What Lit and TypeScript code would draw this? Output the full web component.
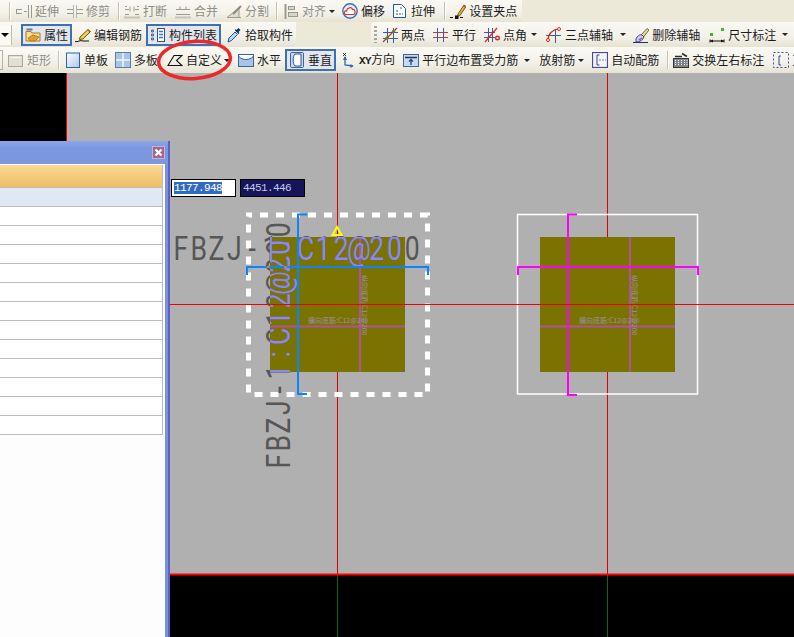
import { LitElement, html, css, svg } from "lit";
import { customElement } from "lit/decorators.js";

// gray used by the disabled tools of the first row
const G = "#9a9a94";

const icons: Record<string, unknown> = {
  extend: svg`<path d="M0 6.5h6M0 10.5h6M8 8.5h3" stroke="${G}"/><path d="M12.5 2v13M15.5 2v13" stroke="${G}"/><path d="M0.5 6v5" stroke="${G}"/>`,
  trim: svg`<path d="M0 6.5h6M0 10.5h6M10 6.5h6M10 10.5h6" stroke="${G}"/><path d="M6.5 2v13M9.5 2v13" stroke="#b4b4ae"/>`,
  cut: svg`<path d="M1 6.5h4M1 11.5h4M11 6.5h4M11 11.5h4M6 3.5v5M10 3.5v5" stroke="${G}"/><path d="M0 14.5h16" stroke="#c4c4bc" stroke-width="2"/><path d="M1 3.5h2M13 3.5h2" stroke="${G}"/>`,
  merge: svg`<path d="M1 6.5h14M1 11.5h14M5 3.5v3M11 3.5v3" stroke="${G}"/><path d="M0 14.5h16" stroke="#c4c4bc" stroke-width="2"/>`,
  split: svg`<path d="M1 14.5h14M1 14.5L13 5v9.5" stroke="${G}" fill="#dedcd0"/><path d="M7 11l8-8" stroke="#8a8a84" stroke-width="2"/>`,
  align: svg`<path d="M2.5 1v15" stroke="${G}" stroke-width="2"/><rect x="5.5" y="3.5" width="6" height="3" fill="#d8d6ca" stroke="${G}"/><rect x="5.5" y="9.5" width="9" height="4" fill="#d8d6ca" stroke="${G}"/>`,
  offset: svg`<circle cx="8" cy="8" r="7.200" fill="#e4ecf8" stroke="#3f6fb0" stroke-width="1.400"/><path d="M3 11.500c-1.500-2 0-4 1.500-3.500 .5-3.500 5-4.500 6-1.500 2.500-.5 3.500 3.500 1.500 5z" fill="#fff" stroke="#d8342c" stroke-width="1.200"/>`,
  stretch: svg`<path d="M1.500 1.500h8l4 4v9h-12z" fill="#fff" stroke="#245a9c"/><path d="M4 8h2M4 11h7M8 5h3" stroke="#245a9c" stroke-dasharray="2 1"/>`,
  grip: svg`<path d="M8 11l6-9 2 1.500-6 9-2.500 1z" fill="#e6b040" stroke="#75561c"/><path d="M13.500 2.500l2 1.500" stroke="#c33"/><path d="M0 14.500h3M10 14.500h3" stroke="#111"/><rect x="5" y="12.500" width="3.500" height="3.500" fill="#111"/>`,
  props: svg`<path d="M1 4.500h5l1 1.500h8v8H1z" fill="#f5dc92" stroke="#a87c28"/><path d="M1.500 2.500h6" stroke="#5b7db4" stroke-width="2"/><path d="M3 11l5-3 6 2-4 4H5z" fill="#e4a022" stroke="#8a5c10" stroke-width=".6"/>`,
  rebar: svg`<path d="M5 10L13 2.500l2.500 2L8 12l-3.500.5z" fill="#f2cf52" stroke="#6a5416"/><path d="M0 14.500c3 1 5-2 8-.5h6" stroke="#111" fill="none"/><path d="M12.500 3l2.500 2" stroke="#c44"/>`,
  list: svg`<path d="M1.500 3h2v2h-2zM1.500 7h2v2h-2zM1.500 11h2v2h-2z" fill="#9ab8e0" stroke="#33507e" stroke-width=".8"/><rect x="7.500" y="1.500" width="7" height="13" fill="#fff" stroke="#33507e"/><path d="M9 4.500h4M9 7.500h4M9 10.500h4" stroke="#3a78c8" stroke-width="1.500"/>`,
  pick: svg`<path d="M2 15l1-4 6-6 2.500 2.500-6 6z" fill="#bcd8f6" stroke="#1c4f98"/><path d="M9 3.500l3.500 3.500 1-1-1-1 2-2-2-2-2 2-1-1z" fill="#12305e"/>`,
  two: svg`<path d="M1 5.500h15M1 11.500h15M5.500 1v15M11.500 1v15" stroke="#3c5a9c"/><path d="M1 15L15 1" stroke="#d8281e" stroke-width="1.200"/><circle cx="5" cy="11" r="1.800" fill="#4f8a2c"/><circle cx="11.500" cy="4.500" r="1.800" fill="#4f8a2c"/>`,
  par: svg`<path d="M0 5.500h15M0 10.500h15" stroke="#b0403a"/><path d="M4.500 1v14M10.500 1v14" stroke="#3c5a9c"/>`,
  angle: svg`<path d="M0 5.500h11M0 10.500h11M4.500 1v14M8.500 1v14" stroke="#3c5a9c"/><path d="M1 15L13 1" stroke="#d8281e" stroke-width="1.200"/><circle cx="13.500" cy="11" r="1.800" fill="#fff" stroke="#d8281e" stroke-width="1.400"/>`,
  arc: svg`<path d="M0 8.500h15M9.500 3v13" stroke="#3c5a9c"/><path d="M2 13C2 7 7 2 13 2" stroke="#d8281e" fill="none" stroke-width="1.200"/><circle cx="2" cy="13" r="1.500" fill="#fff" stroke="#d8281e"/><circle cx="13" cy="2" r="1.500" fill="#fff" stroke="#d8281e"/>`,
  erase: svg`<path d="M8 8L14 1.500l2 1.500-5.500 7z" fill="#f2d47a" stroke="#6a6a70"/><path d="M3 12c1-3 4-5 6-4l2 2c-1 3-4 5-8 5z" fill="#c8cce8" stroke="#3a4a96"/><path d="M0 15.500h15" stroke="#1d2f70"/><path d="M6 13l3-2" stroke="#c03a8a" stroke-width="1.500"/>`,
  dim: svg`<rect x="1" y="6" width="3" height="3" fill="#3cb43c"/><rect x="12" y="1" width="3" height="3" fill="#3cb43c"/><path d="M1 12.500v3M15 12.500v3M1 14h14" stroke="#111"/><path d="M1 14l3-1.500v3zM15 14l-3-1.500v3z" fill="#111"/>`,
  rect: svg`<rect x=".5" y="3.500" width="14" height="11" fill="#e2e0d6" stroke="#aaa8a0"/><path d="M2 5.500h11" stroke="#f6f5ee"/>`,
  single: svg`<defs><linearGradient id="sg" x1="0" y1="0" x2="1" y2="1"><stop offset="0" stop-color="#fff"/><stop offset="1" stop-color="#a9c6f0"/></linearGradient></defs><rect x="1.500" y="1" width="13" height="14.500" fill="url(#sg)" stroke="#2660b8"/>`,
  multi: svg`<rect x=".5" y=".5" width="15" height="15" fill="#a8c6e6" stroke="#5680ac"/><path d="M8 1v14M1 8h14" stroke="#f2f6fb" stroke-width="1.500"/>`,
  custom: svg`<path d="M1 13.500L7 3.500H15L9.500 8.500L15 13.500Z" fill="none" stroke="#111" stroke-width="1.100"/>`,
  horiz: svg`<rect x=".5" y="2.500" width="15" height="12" fill="#a8c4e8" stroke="#3c6498"/><path d="M1 4.500c3 4 11 4 14 0v-1.500H1z" fill="#fff"/><path d="M1 4.500c3 4 11 4 14 0" stroke="#3c6498" fill="none"/>`,
  vert: svg`<rect x="1.500" y=".5" width="13" height="15" rx="1" fill="#c4d8f2" stroke="#3c6498"/><path d="M6 2c-2.500 3-2.500 9 0 12h6V2z" fill="#fff" stroke="#2f5488"/>`,
  xy: svg`<path d="M5 5v8l8 1" stroke="#2a6ab4" fill="none" stroke-width="1.300"/><path d="M5 4l-2 4h4zM13.500 14l-3-2v4z" fill="#2a6ab4"/><path d="M3 1l3 3M6 1L3 4" stroke="#111" stroke-width=".8"/>`,
  paredge: svg`<rect x=".5" y="2.500" width="15" height="12" fill="#c6daf2" stroke="#3c6498"/><path d="M2 5.500h12" stroke="#24344e" stroke-width="1.500"/><path d="M8 13V7.500M6 9.500l2-2 2 2" stroke="#24467a" fill="none" stroke-width="1.300"/>`,
  auto: svg`<rect x=".5" y=".5" width="15" height="15" fill="#f4f4fa" stroke="#4a44b4" stroke-width="1.200"/><path d="M7.500 3H5v10h2.500" stroke="#2c4890" fill="none"/><path d="M7 8h7" stroke="#6a86c4" stroke-dasharray="2 1"/>`,
  swap: svg`<rect x=".5" y="6.500" width="15" height="9" fill="#84848c" stroke="#33333a"/><path d="M2.500 8v6M5.500 8v6M8.500 8v6M11.500 8v6M14 8v6" stroke="#fff" stroke-dasharray="1 1"/><path d="M2 4.500h7M9 1.500l5 3" stroke="#2a2a30" stroke-width="1.500"/>`,
  frame: svg`<rect x=".5" y=".5" width="15" height="15" fill="none" stroke="#3c4ca8" stroke-dasharray="2 2"/><path d="M8 4H6v9h2" stroke="#2c4890" fill="none"/>`,
};

type Item = {
  ml: number;
  kind?: "sep" | "grip" | "drop" | "edge";
  i?: string;
  t?: string;
  arrow?: number;
  on?: boolean;
  off?: boolean;
  latin?: string;
};

const row1: Item[] = [
  { ml: 9, kind: "sep" },
  { ml: 5, i: "extend", t: "延伸", off: true },
  { ml: 8, i: "trim", t: "修剪", off: true },
  { ml: 8, kind: "sep" },
  { ml: 4, i: "cut", t: "打断", off: true },
  { ml: 8, i: "merge", t: "合并", off: true },
  { ml: 8, i: "split", t: "分割", off: true },
  { ml: 7, kind: "sep" },
  { ml: 5, i: "align", t: "对齐", off: true, arrow: 2 },
  { ml: 6, i: "offset", t: "偏移" },
  { ml: 7, i: "stretch", t: "拉伸" },
  { ml: 9, kind: "sep" },
  { ml: 4, i: "grip", t: "设置夹点" },
];

const row2a: Item[] = [
  { ml: 0, kind: "drop" },
  { ml: 9, i: "props", t: "属性", on: true },
  { ml: 3, i: "rebar", t: "编辑钢筋" },
  { ml: 4, i: "list", t: "构件列表", on: true },
  { ml: 5, i: "pick", t: "拾取构件" },
];

const row2b: Item[] = [
  { ml: 3, kind: "grip" },
  { ml: 5, i: "two", t: "两点" },
  { ml: 8, i: "par", t: "平行" },
  { ml: 8, i: "angle", t: "点角", arrow: 3 },
  { ml: 8, i: "arc", t: "三点辅轴", arrow: 6 },
  { ml: 6, i: "erase", t: "删除辅轴" },
  { ml: 9, i: "dim", t: "尺寸标注", arrow: 5 },
];

const row3: Item[] = [
  { ml: 0, kind: "edge" },
  { ml: 5, i: "rect", t: "矩形", off: true },
  { ml: 7, kind: "sep" },
  { ml: 5, i: "single", t: "单板" },
  { ml: 7, i: "multi", t: "多板" },
  { ml: 9, i: "custom", t: "自定义", arrow: 1 },
  { ml: 7, i: "horiz", t: "水平" },
  { ml: 4, i: "vert", t: "垂直", on: true },
  { ml: 4, i: "xy", latin: "XY", t: "方向" },
  { ml: 8, i: "paredge", t: "平行边布置受力筋", arrow: 5 },
  { ml: 8, t: "放射筋", arrow: 2 },
  { ml: 7, i: "auto", t: "自动配筋" },
  { ml: 8, kind: "sep" },
  { ml: 4, i: "swap", t: "交换左右标注" },
  { ml: 9, i: "frame", t: "互换" },
];

// the CAD labels use fixed character cells of about 17.8px, with narrowed glyphs
const LABEL = "FBZJ-1:C12@200";
const CELL = 17.8;
const NARROW = 0.78;
const cells = Array.from(LABEL, (_, n) => (((n + 0.5) * CELL) / NARROW).toFixed(1)).join(" ");

@customElement("app-root")
export class AppRoot extends LitElement {
  static styles = css`
    :host {
      display: block;
      position: relative;
      width: 794px;
      height: 637px;
      overflow: hidden;
      font-family: "Noto Sans CJK SC", "Liberation Sans", sans-serif;
      font-size: 12px;
      color: #1c1c1c;
      background: #ece9d8;
    }

    .page {
      display: flex;
      flex-direction: column;
      height: 100%;
    }

    /* toolbars */
    .row {
      display: flex;
      flex: none;
      overflow: hidden;
      white-space: nowrap;
    }
    .row.r1 { height: 22px; }
    .row.r2 { height: 25px; }
    .row.r3 { height: 26px; }
    .band {
      display: flex;
      align-items: center;
      flex: none;
      background: linear-gradient(#faf9f4, #f3f1e8 60%, #e6e3d3);
    }
    .row.r1 .band { padding-right: 5px; }
    .band.a { padding-right: 3px; border-radius: 0 0 4px 0; }
    .band.b { margin-left: 75px; flex: 1; border-radius: 4px 0 0 0; }
    .row.r3 .band { flex: 1; }

    .tool {
      display: flex;
      align-items: center;
      flex: none;
      gap: 3px;
      height: 20px;
      line-height: 20px;
    }
    .tool svg { display: block; flex: none; }
    .tool.off { color: #8e8e88; }
    .tool.on {
      height: 22px;
      padding: 0 2px;
      border: 2px solid #3f6fb5;
      box-sizing: border-box;
      background: #e4e6ee;
    }
    .latin {
      font-family: "Liberation Mono", monospace;
      font-size: 11px;
      font-weight: 700;
      letter-spacing: -0.6px;
    }
    .arrow {
      flex: none;
      width: 0;
      height: 0;
      border: 3px solid transparent;
      border-top: 3px solid #222;
      border-bottom: 0;
      margin: 0 1px;
      box-sizing: content-box;
    }
    .sep {
      flex: none;
      width: 1px;
      height: 18px;
      background: #c4c2b4;
      border-right: 1px solid #fff;
    }
    .gripper {
      flex: none;
      width: 3px;
      height: 17px;
      background: repeating-linear-gradient(#a8a69a 0 2px, transparent 2px 4px);
    }
    .drop {
      display: flex;
      align-items: center;
      justify-content: flex-end;
      flex: none;
      width: 12px;
      height: 20px;
      padding-right: 2px;
      box-sizing: border-box;
      background: #fbfaf5;
      border-right: 1px solid #bdbbae;
    }
    .drop i {
      width: 0;
      height: 0;
      border: 4px solid transparent;
      border-top: 4px solid #000;
      border-bottom: 0;
    }
    .edge {
      flex: none;
      width: 3px;
      height: 20px;
      border: 1px solid #b4b2a6;
      border-left: 0;
      box-sizing: border-box;
    }

    /* drawing area */
    .canvas {
      position: relative;
      flex: 1;
      min-height: 0;
      background: #000;
    }
    .cad {
      position: absolute;
      inset: 0;
      display: block;
    }
    .big {
      font-family: Roboto, "Liberation Sans", sans-serif;
      font-size: 34px;
      text-anchor: middle;
    }
    .tiny {
      font-family: "Noto Sans CJK SC", sans-serif;
      font-size: 7px;
      fill: #9a8fa6;
    }

    /* floating panel */
    .panel {
      position: absolute;
      left: 0;
      top: 68px;
      bottom: 0;
      width: 170px;
      display: flex;
      flex-direction: column;
      box-sizing: border-box;
      background: #7b90e0;
      border-right: 2px solid #5a62c4;
    }
    .title {
      display: flex;
      align-items: center;
      justify-content: flex-end;
      flex: none;
      height: 23px;
      padding-right: 3px;
      box-sizing: border-box;
      background: linear-gradient(#8ea6ea, #7a97e0 30%, #7a97e0);
    }
    .close {
      display: flex;
      width: 13px;
      height: 13px;
      box-sizing: border-box;
      border: 1px solid #c4b4d8;
      background: #a8658c;
    }
    .close svg { display: block; }
    .body {
      flex: 1;
      margin-right: 3px;
      padding-top: 1px;
      background: #fdfdfd;
    }
    .table {
      width: 163px;
      box-sizing: border-box;
      border-right: 1px solid #bcbcbc;
    }
    .th {
      height: 23px;
      box-sizing: border-box;
      background: linear-gradient(#fbd995, #f0bd62);
      border-bottom: 1px solid #bcbcbc;
    }
    .sub {
      height: 19px;
      box-sizing: border-box;
      background: #dfe8f4;
      border-bottom: 1px solid #bcbcbc;
    }
    .tr {
      height: 19px;
      box-sizing: border-box;
      background: #fff;
      border-bottom: 1px solid #bcbcbc;
    }

    /* coordinate inputs */
    .coord {
      position: absolute;
      top: 106px;
      width: 65px;
      height: 18px;
      padding: 2px;
      box-sizing: border-box;
      border: 1px solid #000;
      font-family: "Liberation Mono", monospace;
      font-size: 11px;
      letter-spacing: -0.6px;
      line-height: 13px;
    }
    .coord.x { left: 171px; background: #fff; }
    .coord.x span { background: #316ac5; color: #fff; }
    .coord.y { left: 240px; background: #16145a; color: #c4cbe8; }

    .ring {
      position: absolute;
      left: 150px;
      top: 34px;
      display: block;
    }
  `;

  renderItem(it: Item) {
    const m = `margin-left:${it.ml}px`;
    if (it.kind === "sep") return html`<span class="sep" style=${m}></span>`;
    if (it.kind === "grip") return html`<span class="gripper" style=${m}></span>`;
    if (it.kind === "drop") return html`<span class="drop" style=${m}><i></i></span>`;
    if (it.kind === "edge") return html`<span class="edge" style=${m}></span>`;
    const cls = `tool${it.on ? " on" : ""}${it.off ? " off" : ""}`;
    return html`
      <span class=${cls} style=${m}>
        ${it.i ? html`<svg width="16" height="16" viewBox="0 0 16 16">${icons[it.i]}</svg>` : ""}
        <span>${it.latin ? html`<span class="latin">${it.latin}</span>` : ""}${it.t}</span>
      </span>
      ${it.arrow ? html`<span class="arrow" style="margin-left:${it.arrow + 1}px"></span>` : ""}
    `;
  }

  // both dimension labels are gray outside the olive slab and blue over it
  renderLabels() {
    const texts = (fill: string) => svg`
      <text class="big" x=${cells} y="0" transform="translate(172 260) scale(${NARROW} 1)" fill=${fill}>${LABEL}</text>
      <text class="big" x=${cells} y="0" transform="translate(290 470) rotate(-90) scale(${NARROW} 1)" fill=${fill}>${LABEL}</text>
    `;
    return svg`
      ${texts("#565656")}
      <g clip-path="url(#slab)">${texts("#8a88f8")}</g>
    `;
  }

  renderSlab(x: number, small: number) {
    return svg`
      <rect x=${x} y="237" width="135" height="135" fill="#7a7300"/>
      <path d="M${x + 90} 237v135M${x} 326.500h135" stroke="#b0529a" stroke-width="2"/>
      <text class="tiny" x=${small} y="323">横向底筋:C12@200</text>
      <text class="tiny" transform="translate(${x + 92} 275) rotate(90)">纵向底筋:C12@200</text>
    `;
  }

  render() {
    return html`
      <div class="page">
        <div class="row r1">
          <div class="band">${row1.map((i) => this.renderItem(i))}</div>
        </div>
        <div class="row r2">
          <div class="band a">${row2a.map((i) => this.renderItem(i))}</div>
          <div class="band b">${row2b.map((i) => this.renderItem(i))}</div>
        </div>
        <div class="row r3">
          <div class="band">${row3.map((i) => this.renderItem(i))}</div>
        </div>

        <div class="canvas">
          <svg class="cad" width="794" height="564" viewBox="0 73 794 564">
            <defs>
              <clipPath id="slab"><rect x="270" y="237" width="135" height="135"/></clipPath>
            </defs>
            <rect x="67" y="73" width="727" height="501" fill="#b0b0b0"/>
            <path d="M337.500 574v63M607.500 574v63" stroke="#007000"/>
            <path d="M66.500 73v70M337.500 73v501M607.500 73v501" stroke="#e00000"/>

            ${this.renderSlab(270, 308)}
            ${this.renderSlab(540, 579)}

            <rect x="248.500" y="215" width="179" height="179.500" fill="none" stroke="#fff" stroke-width="5" stroke-dasharray="8 8" stroke-dashoffset="4.500"/>
            ${this.renderLabels()}

            <path d="M247 275v-8H428v8M307 214.500h-9V394h9" fill="none" stroke="#0a84ff" stroke-width="2"/>
            <path d="M267 266.500l3 1M284 266.500l3 1" stroke="#e08a20" stroke-width="1.500"/>
            <path d="M337 227l4.500 8h-9z" fill="none" stroke="#ffff00" stroke-width="2"/>

            <rect x="517.500" y="214.500" width="180" height="179.500" fill="none" stroke="#fff" stroke-width="1.500"/>
            <path d="M518 275v-8H698v8M577 214.500h-9V395h9" fill="none" stroke="#ff00ff" stroke-width="2"/>

            <path d="M170 304.500h624" stroke="#f00000"/>
            <path d="M170 574.500h624" stroke="#ff0000" stroke-width="2"/>
          </svg>

          <div class="panel">
            <div class="title">
              <span class="close">
                <svg width="11" height="11" viewBox="0 0 11 11"><path d="M2.500 2.500l6 6M8.500 2.500l-6 6" stroke="#fff" stroke-width="2.200"/></svg>
              </span>
            </div>
            <div class="body">
              <div class="table">
                <div class="th"></div>
                <div class="sub"></div>
                ${Array.from({ length: 12 }, () => html`<div class="tr"></div>`)}
              </div>
            </div>
          </div>

          <div class="coord x"><span>1177.948</span></div>
          <div class="coord y">4451.446</div>
        </div>
      </div>

      <svg class="ring" width="90" height="54" viewBox="150 34 90 54">
        <ellipse cx="194.500" cy="60" rx="36" ry="18.500" fill="none" stroke="#ea2a2a" stroke-width="3.500" transform="rotate(-4 194.500 60)"/>
      </svg>
    `;
  }
}
